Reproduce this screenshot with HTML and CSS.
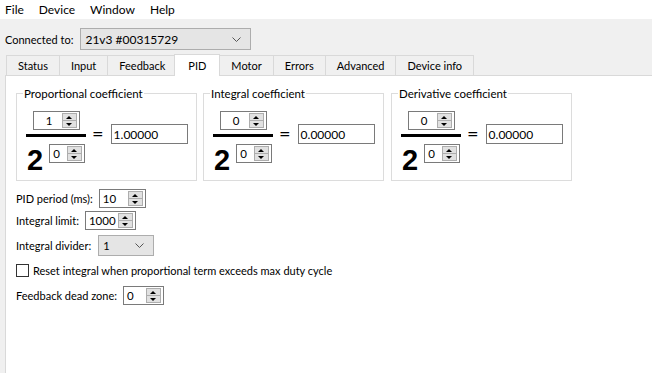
FILE: index.html
```html
<!DOCTYPE html>
<html lang="en">
<head>
<meta charset="UTF-8" />
<title>Motor controller - PID</title>
<link rel="stylesheet" href="styles.css">
</head>
<body>
  <nav class="menubar">
    <span>File</span>
    <span>Device</span>
    <span>Window</span>
    <span>Help</span>
  </nav>

  <div class="connbar">
    <span>Connected to:</span>
    <div class="combo combo-wide">
      <span>21v3 #00315729</span>
      <svg class="chev" width="9" height="5" viewBox="0 0 9 5"><path d="M0.5 0.5 L4.5 4.5 L8.5 0.5" fill="none" stroke="#555" /></svg>
    </div>
  </div>

  <div class="tabs">
    <div class="tab">Status</div>
    <div class="tab">Input</div>
    <div class="tab">Feedback</div>
    <div class="tab active">PID</div>
    <div class="tab">Motor</div>
    <div class="tab">Errors</div>
    <div class="tab">Advanced</div>
    <div class="tab">Device info</div>
  </div>

  <main class="pane">
    <div class="groups">
      <fieldset class="group">
        <legend>Proportional coefficient</legend>
        <div class="coef">
          <div class="fraction">
            <div class="spin spin-num"><span class="val center">1</span><span class="btns"><i class="up"></i><i class="down"></i></span></div>
            <div class="bar"></div>
            <div class="denom"><span class="two">2</span><div class="spin spin-exp"><span class="val">0</span><span class="btns"><i class="up"></i><i class="down"></i></span></div></div>
          </div>
          <span class="eq">=</span>
          <div class="field">1.00000</div>
        </div>
      </fieldset>

      <fieldset class="group">
        <legend>Integral coefficient</legend>
        <div class="coef">
          <div class="fraction">
            <div class="spin spin-num"><span class="val center">0</span><span class="btns"><i class="up"></i><i class="down"></i></span></div>
            <div class="bar"></div>
            <div class="denom"><span class="two">2</span><div class="spin spin-exp"><span class="val">0</span><span class="btns"><i class="up"></i><i class="down"></i></span></div></div>
          </div>
          <span class="eq">=</span>
          <div class="field">0.00000</div>
        </div>
      </fieldset>

      <fieldset class="group">
        <legend>Derivative coefficient</legend>
        <div class="coef">
          <div class="fraction">
            <div class="spin spin-num"><span class="val center">0</span><span class="btns"><i class="up"></i><i class="down"></i></span></div>
            <div class="bar"></div>
            <div class="denom"><span class="two">2</span><div class="spin spin-exp"><span class="val">0</span><span class="btns"><i class="up"></i><i class="down"></i></span></div></div>
          </div>
          <span class="eq">=</span>
          <div class="field">0.00000</div>
        </div>
      </fieldset>
    </div>

    <div class="settings">
      <div class="row row-period">
        <span>PID period (ms):</span>
        <div class="spin spin-period"><span class="val">10</span><span class="btns"><i class="up"></i><i class="down"></i></span></div>
      </div>
      <div class="row row-limit">
        <span>Integral limit:</span>
        <div class="spin spin-limit"><span class="val">1000</span><span class="btns"><i class="up"></i><i class="down"></i></span></div>
      </div>
      <div class="row">
        <span>Integral divider:</span>
        <div class="combo combo-small">
          <span>1</span>
          <svg class="chev" width="9" height="5" viewBox="0 0 9 5"><path d="M0.5 0.5 L4.5 4.5 L8.5 0.5" fill="none" stroke="#555" /></svg>
        </div>
      </div>
      <label class="row check">
        <span class="box"></span>
        <span>Reset integral when proportional term exceeds max duty cycle</span>
      </label>
      <div class="row">
        <span>Feedback dead zone:</span>
        <div class="spin spin-dead"><span class="val">0</span><span class="btns"><i class="up"></i><i class="down"></i></span></div>
      </div>
    </div>
  </main>
</body>
</html>
```

FILE: styles.css
```css
body {
  margin: 0;
  background: #f0f0f0;
  font-family: Lato, "Liberation Sans", sans-serif;
  font-size: 11px;
  color: #000;
  height: 373px;
  display: flex;
  flex-direction: column;
  overflow: hidden;
}
.menubar {
  background: white;
  height: 19px;
  display: flex;
  align-items: center;
  padding-left: 5px;
  gap: 15px;
  font-size: 12px;
}
.connbar {
  display: flex;
  align-items: center;
  gap: 7px;
  padding: 9px 0 0 5px;
  height: 22px;
}
.combo {
  background: #e5e5e5;
  border: 1px solid #adadad;
  display: flex;
  align-items: center;
  justify-content: space-between;
  padding: 0 9px 0 4px;
  box-sizing: border-box;
}
.combo-wide {
  width: 171px;
  height: 22px;
  font-size: 12px;
}
.combo-small {
  width: 56px;
  height: 21px;
  margin-left: 1px;
}
.tabs {
  display: flex;
  padding: 5px 0 0 6px;
  height: 20px;
  align-items: flex-end;
}
.tab {
  height: 19px;
  border: 1px solid #d9d9d9;
  border-bottom: none;
  margin-right: -1px;
  padding: 0 11px;
  display: flex;
  align-items: center;
  background: #f0f0f0;
}
.tab.active {
  background: white;
  height: 21px;
  margin: 0 -1px 0 -2px;
  padding: 0 13px;
  position: relative;
  z-index: 1;
  top: 1px;
}
.pane {
  flex: 1;
  background: white;
  border-top: 1px solid #d9d9d9;
  border-left: 1px solid #d9d9d9;
  margin-left: 5px;
  padding: 10px 0 0 10px;
}
.groups {
  display: flex;
  gap: 6px;
}
.group {
  margin: 0;
  border: 1px solid #dcdcdc;
  width: 181px;
  height: 95px;
  box-sizing: border-box;
  padding: 10px 0 0 9px;
}
.group + .group + .group {
  margin-left: 1px;
}
.group legend {
  padding: 0 1px;
  margin-left: -3px;
  line-height: 15px;
  font-size: 11.5px;
}
.coef {
  display: flex;
  align-items: flex-start;
}
.fraction {
  width: 60px;
  display: flex;
  flex-direction: column;
  align-items: center;
}
.bar {
  width: 60px;
  height: 3px;
  background: #000;
  margin: 4px 0 7px;
}
.denom {
  display: flex;
  align-self: flex-start;
  gap: 6px;
  padding-left: 1px;
}
.two {
  font-family: "Liberation Sans", sans-serif;
  font-weight: bold;
  font-size: 29px;
  line-height: 22px;
  margin-top: 5px;
}
.eq {
  font-size: 20px;
  line-height: 18px;
  margin: 13px 7px 0 6px;
}
.field {
  width: 77px;
  height: 20px;
  box-sizing: border-box;
  border: 1px solid #7a7a7a;
  padding-left: 2px;
  display: flex;
  align-items: center;
  margin-top: 13px;
  font-size: 12px;
}
.spin {
  display: flex;
  border: 1px solid #7a7a7a;
  height: 19px;
  box-sizing: border-box;
  background: white;
  font-size: 11.5px;
}
.spin .val {
  flex: 1;
  display: flex;
  align-items: center;
  padding-left: 3px;
}
.spin .val.center {
  justify-content: center;
}
.btns {
  width: 13px;
  margin: 1px 2px 1px 0;
  display: flex;
  flex-direction: column;
  border: 1px solid #adadad;
  background: #e1e1e1;
}
.btns i {
  flex: 1;
  position: relative;
}
.btns i + i {
  border-top: 1px solid #adadad;
}
.btns i::after {
  content: "";
  position: absolute;
  left: 3px;
  border-left: 3px solid transparent;
  border-right: 3px solid transparent;
}
.btns .up::after {
  top: 2px;
  border-bottom: 3px solid #000;
}
.btns .down::after {
  top: 2px;
  border-top: 3px solid #000;
}
.spin-num {
  width: 47px;
}
.spin-exp {
  width: 36px;
}
.spin-period {
  width: 47px;
}
.spin-limit {
  width: 51px;
}
.spin-dead {
  width: 41px;
}
.settings {
  display: flex;
  flex-direction: column;
  gap: 5px;
  margin-top: 7px;
}
.row {
  display: flex;
  align-items: center;
  gap: 6px;
  height: 20px;
}
.row-limit {
  margin-top: -3px;
}
.check {
  gap: 4px;
}
.box {
  width: 13px;
  height: 13px;
  border: 1px solid #333;
  box-sizing: border-box;
  background: white;
}
```
